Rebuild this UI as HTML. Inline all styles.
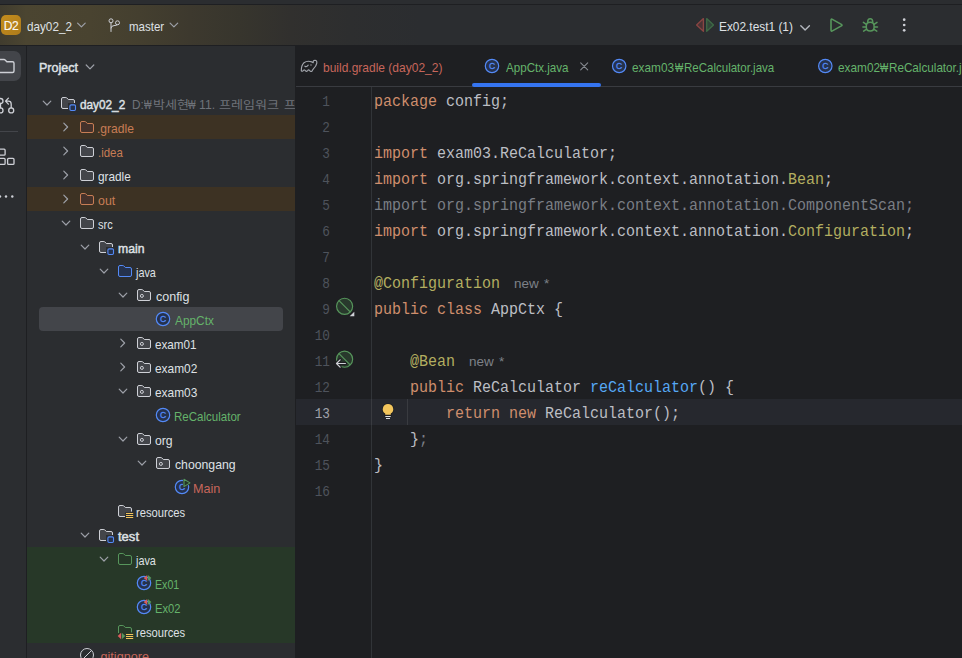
<!DOCTYPE html>
<html lang="ko">
<head>
<meta charset="utf-8">
<title>day02_2 – AppCtx.java</title>
<style>
html,body{margin:0;padding:0;}
body{width:962px;height:658px;overflow:hidden;background:#2b2d30;position:relative;
 font-family:"Liberation Sans","Noto Sans CJK KR",sans-serif;font-size:13px;color:#dfe1e5;}
.abs{position:absolute;}
svg{overflow:visible;}
#topstrip{left:0;top:0;width:962px;height:4px;background:#2b2d30;}
#topline{left:0;top:4px;width:962px;height:1px;background:#1e1f22;}
#toolbar{left:0;top:5px;width:962px;height:40px;background:linear-gradient(90deg,#403c2e 0px,#4b4531 26px,#494330 90px,#443f2f 140px,#3d392e 190px,#37352d 240px,#31302e 290px,#2d2e2f 350px,#2b2d30 420px);}
#toolline{left:0;top:45px;width:962px;height:1px;background:#1e1f22;}
#stripe{left:0;top:46px;width:26px;height:612px;background:#2b2d30;overflow:hidden;}
#stripeline{left:26px;top:46px;width:1px;height:612px;background:#1e1f22;}
#panel{left:27px;top:46px;width:268px;height:612px;background:#2b2d30;overflow:hidden;}
#panelline{left:295px;top:46px;width:1px;height:612px;background:#1e1f22;}
#editor{left:296px;top:46px;width:666px;height:612px;background:#1e1f22;overflow:hidden;}
.t{position:absolute;white-space:pre;line-height:16px;}
.ui{transform:scaleX(0.895);transform-origin:0 50%;}
.b{font-weight:normal;-webkit-text-stroke:0.45px currentColor;}
.ign{color:#c77d55;}
.add{color:#65b36b;}
.unk{color:#c7665b;}
.grey{color:#6f737a;}
.code{position:absolute;left:78px;white-space:pre;font-family:"Liberation Mono","Noto Sans CJK KR",monospace;font-size:16.5px;line-height:26px;height:26px;color:#bcbec4;transform:scaleX(0.90894);transform-origin:0 50%;}
.ln{position:absolute;left:-66.2px;width:100px;text-align:right;font-family:"Liberation Mono",monospace;font-size:14px;line-height:26px;height:26px;color:#4e535c;transform:scaleX(0.91);transform-origin:100% 50%;}
.ln.cur{color:#a1a3ab;}
.k{color:#cf8e6d;}
.a{color:#b3ae60;}
.m{color:#56a8f5;}
.u{color:#7a7e85;}
.hint{font-family:"Liberation Sans",sans-serif;font-size:13.5px;color:#7d8188;word-spacing:1.5px;}
</style>
</head>
<body>
<div id="topstrip" class="abs"></div>
<div id="topline" class="abs"></div>
<div id="toolbar" class="abs">
<div class="abs" style="left:1px;top:10px;width:20px;height:20px;border-radius:5px;background:linear-gradient(135deg,#c48d1d,#ad7b1b)"></div>
<span class="t" style="left:1px;top:13px;width:20px;text-align:center;font-size:12px;color:rgba(255,255,255,.93);letter-spacing:-0.4px;-webkit-text-stroke:0.2px rgba(255,255,255,.93)">D2</span>
<span class="t ui " style="left:27.00px;top:13.8px;transform:scaleX(0.9003)">day02_2</span>
<svg class="abs" style="left:73px;top:11px" width="16" height="16" viewBox="0 0 16 16"><g transform="translate(0.4 0.9)"><path d="M4.2 6.2 L8 10 L11.8 6.2" fill="none" stroke="#9da0a8" stroke-width="1.2" stroke-linecap="round" stroke-linejoin="round"/></g></svg>
<svg class="abs" style="left:106px;top:12px" width="16" height="16" viewBox="0 0 16 16"><circle cx="5" cy="3.8" r="2" fill="none" stroke="#ced0d6"/><circle cx="11.5" cy="5.8" r="2" fill="none" stroke="#ced0d6"/><path d="M5 5.8 V14.5 M5 11 Q5 8.8 8 8.6 Q11.2 8.4 11.4 7.8" fill="none" stroke="#ced0d6" stroke-linecap="round"/></svg>
<span class="t ui " style="left:128.50px;top:13.8px;transform:scaleX(0.8836)">master</span>
<svg class="abs" style="left:165px;top:11px" width="16" height="16" viewBox="0 0 16 16"><g transform="translate(0.9 0.9)"><path d="M4.2 6.2 L8 10 L11.8 6.2" fill="none" stroke="#9da0a8" stroke-width="1.2" stroke-linecap="round" stroke-linejoin="round"/></g></svg>
<span class="t ui " style="left:718.69px;top:13.8px;transform:scaleX(0.9133)">Ex02.test1 (1)</span>
</div>
<div id="toolline" class="abs"></div>
<div id="stripe" class="abs">
<div class="abs" style="left:-9px;top:5px;width:30px;height:30px;border-radius:7px;background:#43454a"></div>
<svg class="abs" style="left:-4px;top:10px" width="20" height="20" viewBox="0 0 20 20"><g transform="translate(0.5 0)"><path d="M0.5 5 Q0.5 3.5 2 3.5 H7.6 Q8.2 3.5 8.6 3.9 L10.4 5.7 H16 Q17.5 5.7 17.5 7.2 V15 Q17.5 16.5 16 16.5 H2 Q0.5 16.5 0.5 15 Z" fill="none" stroke="#ced0d6" stroke-width="1.4"/></g></svg>
<svg class="abs" style="left:-4px;top:49px" width="20" height="20" viewBox="0 0 20 20"><g transform="translate(0 0.7)"><circle cx="4.5" cy="5.3" r="2.5" fill="none" stroke="#ced0d6" stroke-width="1.3"/><circle cx="4.5" cy="14.7" r="2.5" fill="none" stroke="#ced0d6" stroke-width="1.3"/><circle cx="15.2" cy="14.7" r="2.5" fill="none" stroke="#ced0d6" stroke-width="1.3"/><path d="M4.5 7.8 V12.2 M15.2 12.2 V8.2 Q15.2 5.4 12.4 5.4 H9.9 M12.4 2.4 L9.5 5.4 L12.4 8.4" fill="none" stroke="#ced0d6" stroke-width="1.3" stroke-linecap="round" stroke-linejoin="round"/></g></svg>
<div class="abs" style="left:0;top:85px;width:18px;height:1px;background:#43454a"></div>
<svg class="abs" style="left:0px;top:100px" width="20" height="22" viewBox="0 0 20 22"><rect x="-1.5" y="3.2" width="6.6" height="6" rx="1" fill="none" stroke="#ced0d6" stroke-width="1.3"/><rect x="-1.5" y="12.4" width="6.6" height="6" rx="1" fill="none" stroke="#ced0d6" stroke-width="1.3"/><rect x="7.6" y="12.4" width="6.4" height="6" rx="1" fill="none" stroke="#ced0d6" stroke-width="1.3"/></svg>
<svg class="abs" style="left:0px;top:148px" width="16" height="4" viewBox="0 0 16 4"><g transform="translate(0 0.5)"><circle cx="0" cy="2" r="1.2" fill="#ced0d6"/><circle cx="6" cy="2" r="1.2" fill="#ced0d6"/><circle cx="12.3" cy="2" r="1.2" fill="#ced0d6"/></g></svg>
</div>
<div id="stripeline" class="abs"></div>
<div id="panel" class="abs">
<span class="t ui b" style="left:11.84px;top:13.8px;transform:scaleX(0.9637)">Project</span>
<svg class="abs" style="left:55px;top:12px" width="16" height="16" viewBox="0 0 16 16"><g transform="translate(0 0.8)"><path d="M4.2 6.2 L8 10 L11.8 6.2" fill="none" stroke="#9da0a8" stroke-width="1.2" stroke-linecap="round" stroke-linejoin="round"/></g></svg>
<svg class="abs" style="left:12px;top:49px" width="16" height="16" viewBox="0 0 16 16"><path d="M4.2 6.2 L8 10 L11.8 6.2" fill="none" stroke="#9da0a8" stroke-width="1.2" stroke-linecap="round" stroke-linejoin="round"/></svg>
<svg class="abs" style="left:33px;top:49px" width="16" height="16" viewBox="0 0 16 16"><path d="M1.5 4 Q1.5 2.5 3 2.5 H5.9 Q6.4 2.5 6.8 2.9 L8.3 4.5 H13 Q14.5 4.5 14.5 6 V8 H8 V13.5 H3 Q1.5 13.5 1.5 12 Z" fill="#43454a" stroke="none"/><path d="M14.5 8 V6 Q14.5 4.5 13 4.5 H8.3 L6.8 2.9 Q6.4 2.5 5.9 2.5 H3 Q1.5 2.5 1.5 4 V12 Q1.5 13.5 3 13.5 H8" fill="none" stroke="#ced0d6" stroke-width="1"/><rect x="9.9" y="9.9" width="5.6" height="5.6" rx="1.2" fill="#25324d" stroke="#548af7" stroke-width="1.1"/></svg>
<span class="t ui b" style="left:53.20px;top:50.5px;transform:scaleX(0.9063)">day02_2</span>
<span class="t ui grey" style="left:104.80px;top:50.5px;transform:scaleX(0.9044)">D:</span>
<span class="t ui grey" style="left:116.90px;top:50.5px;transform:scaleX(0.6154)">₩</span>
<span class="t ui grey" style="left:125.57px;top:50.5px;font-size:11.5px;transform:scaleX(1.1340)">박세현</span>
<span class="t ui grey" style="left:161.30px;top:50.5px;transform:scaleX(0.6154)">₩</span>
<span class="t ui grey" style="left:172.00px;top:50.5px;transform:scaleX(0.9397)">11.</span>
<span class="t ui grey" style="left:192.40px;top:50.5px;font-size:11.5px;transform:scaleX(1.1353)">프레임워크</span>
<span class="t ui grey" style="left:256.90px;top:50.5px;font-size:11.5px;transform:scaleX(1.1200)">프</span>
<div class="abs" style="left:0;top:69px;width:268px;height:24px;background:#3d3223"></div>
<svg class="abs" style="left:30px;top:73px" width="16" height="16" viewBox="0 0 16 16"><g transform="translate(0.6 0)"><path d="M6.2 4.2 L10 8 L6.2 11.8" fill="none" stroke="#9da0a8" stroke-width="1.2" stroke-linecap="round" stroke-linejoin="round"/></g></svg>
<svg class="abs" style="left:52px;top:73px" width="16" height="16" viewBox="0 0 16 16"><path d="M1.5 4 Q1.5 2.5 3 2.5 H5.9 Q6.4 2.5 6.8 2.9 L8.3 4.5 H13 Q14.5 4.5 14.5 6 V12 Q14.5 13.5 13 13.5 H3 Q1.5 13.5 1.5 12 Z" fill="#45322b" stroke="#c77d55" stroke-width="1"/></svg>
<span class="t ui ign" style="left:70.47px;top:74.5px;transform:scaleX(0.9294)">.gradle</span>
<svg class="abs" style="left:30px;top:97px" width="16" height="16" viewBox="0 0 16 16"><g transform="translate(0.6 0)"><path d="M6.2 4.2 L10 8 L6.2 11.8" fill="none" stroke="#9da0a8" stroke-width="1.2" stroke-linecap="round" stroke-linejoin="round"/></g></svg>
<svg class="abs" style="left:52px;top:97px" width="16" height="16" viewBox="0 0 16 16"><path d="M1.5 4 Q1.5 2.5 3 2.5 H5.9 Q6.4 2.5 6.8 2.9 L8.3 4.5 H13 Q14.5 4.5 14.5 6 V12 Q14.5 13.5 13 13.5 H3 Q1.5 13.5 1.5 12 Z" fill="#43454a" stroke="#ced0d6" stroke-width="1"/></svg>
<span class="t ui ign" style="left:70.52px;top:98.5px;transform:scaleX(0.8798)">.idea</span>
<svg class="abs" style="left:30px;top:121px" width="16" height="16" viewBox="0 0 16 16"><g transform="translate(0.6 0)"><path d="M6.2 4.2 L10 8 L6.2 11.8" fill="none" stroke="#9da0a8" stroke-width="1.2" stroke-linecap="round" stroke-linejoin="round"/></g></svg>
<svg class="abs" style="left:52px;top:121px" width="16" height="16" viewBox="0 0 16 16"><path d="M1.5 4 Q1.5 2.5 3 2.5 H5.9 Q6.4 2.5 6.8 2.9 L8.3 4.5 H13 Q14.5 4.5 14.5 6 V12 Q14.5 13.5 13 13.5 H3 Q1.5 13.5 1.5 12 Z" fill="#43454a" stroke="#ced0d6" stroke-width="1"/></svg>
<span class="t ui " style="left:71.40px;top:122.5px;transform:scaleX(0.9079)">gradle</span>
<div class="abs" style="left:0;top:141px;width:268px;height:24px;background:#3d3223"></div>
<svg class="abs" style="left:30px;top:145px" width="16" height="16" viewBox="0 0 16 16"><g transform="translate(0.6 0)"><path d="M6.2 4.2 L10 8 L6.2 11.8" fill="none" stroke="#9da0a8" stroke-width="1.2" stroke-linecap="round" stroke-linejoin="round"/></g></svg>
<svg class="abs" style="left:52px;top:145px" width="16" height="16" viewBox="0 0 16 16"><path d="M1.5 4 Q1.5 2.5 3 2.5 H5.9 Q6.4 2.5 6.8 2.9 L8.3 4.5 H13 Q14.5 4.5 14.5 6 V12 Q14.5 13.5 13 13.5 H3 Q1.5 13.5 1.5 12 Z" fill="#45322b" stroke="#c77d55" stroke-width="1"/></svg>
<span class="t ui ign" style="left:71.40px;top:146.5px;transform:scaleX(0.9534)">out</span>
<svg class="abs" style="left:31px;top:169px" width="16" height="16" viewBox="0 0 16 16"><path d="M4.2 6.2 L8 10 L11.8 6.2" fill="none" stroke="#9da0a8" stroke-width="1.2" stroke-linecap="round" stroke-linejoin="round"/></svg>
<svg class="abs" style="left:52px;top:169px" width="16" height="16" viewBox="0 0 16 16"><path d="M1.5 4 Q1.5 2.5 3 2.5 H5.9 Q6.4 2.5 6.8 2.9 L8.3 4.5 H13 Q14.5 4.5 14.5 6 V12 Q14.5 13.5 13 13.5 H3 Q1.5 13.5 1.5 12 Z" fill="#43454a" stroke="#ced0d6" stroke-width="1"/></svg>
<span class="t ui " style="left:70.90px;top:170.5px;transform:scaleX(0.8469)">src</span>
<svg class="abs" style="left:50px;top:193px" width="16" height="16" viewBox="0 0 16 16"><path d="M4.2 6.2 L8 10 L11.8 6.2" fill="none" stroke="#9da0a8" stroke-width="1.2" stroke-linecap="round" stroke-linejoin="round"/></svg>
<svg class="abs" style="left:71px;top:193px" width="16" height="16" viewBox="0 0 16 16"><path d="M1.5 4 Q1.5 2.5 3 2.5 H5.9 Q6.4 2.5 6.8 2.9 L8.3 4.5 H13 Q14.5 4.5 14.5 6 V8 H8 V13.5 H3 Q1.5 13.5 1.5 12 Z" fill="#43454a" stroke="none"/><path d="M14.5 8 V6 Q14.5 4.5 13 4.5 H8.3 L6.8 2.9 Q6.4 2.5 5.9 2.5 H3 Q1.5 2.5 1.5 4 V12 Q1.5 13.5 3 13.5 H8" fill="none" stroke="#ced0d6" stroke-width="1"/><rect x="9.9" y="9.9" width="5.6" height="5.6" rx="1.2" fill="#25324d" stroke="#548af7" stroke-width="1.1"/></svg>
<span class="t ui b" style="left:91.20px;top:194.5px;transform:scaleX(0.9375)">main</span>
<svg class="abs" style="left:69px;top:217px" width="16" height="16" viewBox="0 0 16 16"><path d="M4.2 6.2 L8 10 L11.8 6.2" fill="none" stroke="#9da0a8" stroke-width="1.2" stroke-linecap="round" stroke-linejoin="round"/></svg>
<svg class="abs" style="left:90px;top:217px" width="16" height="16" viewBox="0 0 16 16"><path d="M1.5 4 Q1.5 2.5 3 2.5 H5.9 Q6.4 2.5 6.8 2.9 L8.3 4.5 H13 Q14.5 4.5 14.5 6 V12 Q14.5 13.5 13 13.5 H3 Q1.5 13.5 1.5 12 Z" fill="#25324d" stroke="#548af7" stroke-width="1"/></svg>
<span class="t ui " style="left:109.33px;top:218.5px;transform:scaleX(0.8314)">java</span>
<svg class="abs" style="left:88px;top:241px" width="16" height="16" viewBox="0 0 16 16"><path d="M4.2 6.2 L8 10 L11.8 6.2" fill="none" stroke="#9da0a8" stroke-width="1.2" stroke-linecap="round" stroke-linejoin="round"/></svg>
<svg class="abs" style="left:109px;top:241px" width="16" height="16" viewBox="0 0 16 16"><path d="M1.5 4 Q1.5 2.5 3 2.5 H5.9 Q6.4 2.5 6.8 2.9 L8.3 4.5 H13 Q14.5 4.5 14.5 6 V12 Q14.5 13.5 13 13.5 H3 Q1.5 13.5 1.5 12 Z" fill="#43454a" stroke="#ced0d6" stroke-width="1"/><circle cx="5.9" cy="8.9" r="1.5" fill="none" stroke="#ced0d6" stroke-width="1"/></svg>
<span class="t ui " style="left:128.50px;top:242.5px;transform:scaleX(0.9605)">config</span>
<div class="abs" style="left:12px;top:261px;width:244px;height:24px;border-radius:4px;background:#43454a"></div>
<svg class="abs" style="left:128px;top:265px" width="16" height="16" viewBox="0 0 16 16"><circle cx="8" cy="8" r="6.7" fill="#25324d" stroke="#548af7" stroke-width="1.2"/><text transform="translate(8 0) scale(0.9 1) translate(-8 0)" x="8" y="11.45" text-anchor="middle" font-family="Liberation Sans, sans-serif" font-size="9.6" fill="#548af7" stroke="#548af7" stroke-width="0.3">C</text></svg>
<span class="t ui add" style="left:147.60px;top:266.5px;transform:scaleX(0.9112)">AppCtx</span>
<svg class="abs" style="left:87px;top:289px" width="16" height="16" viewBox="0 0 16 16"><g transform="translate(0.6 0)"><path d="M6.2 4.2 L10 8 L6.2 11.8" fill="none" stroke="#9da0a8" stroke-width="1.2" stroke-linecap="round" stroke-linejoin="round"/></g></svg>
<svg class="abs" style="left:109px;top:289px" width="16" height="16" viewBox="0 0 16 16"><path d="M1.5 4 Q1.5 2.5 3 2.5 H5.9 Q6.4 2.5 6.8 2.9 L8.3 4.5 H13 Q14.5 4.5 14.5 6 V12 Q14.5 13.5 13 13.5 H3 Q1.5 13.5 1.5 12 Z" fill="#43454a" stroke="#ced0d6" stroke-width="1"/><circle cx="5.9" cy="8.9" r="1.5" fill="none" stroke="#ced0d6" stroke-width="1"/></svg>
<span class="t ui " style="left:128.30px;top:290.5px;transform:scaleX(0.8975)">exam01</span>
<svg class="abs" style="left:87px;top:313px" width="16" height="16" viewBox="0 0 16 16"><g transform="translate(0.6 0)"><path d="M6.2 4.2 L10 8 L6.2 11.8" fill="none" stroke="#9da0a8" stroke-width="1.2" stroke-linecap="round" stroke-linejoin="round"/></g></svg>
<svg class="abs" style="left:109px;top:313px" width="16" height="16" viewBox="0 0 16 16"><path d="M1.5 4 Q1.5 2.5 3 2.5 H5.9 Q6.4 2.5 6.8 2.9 L8.3 4.5 H13 Q14.5 4.5 14.5 6 V12 Q14.5 13.5 13 13.5 H3 Q1.5 13.5 1.5 12 Z" fill="#43454a" stroke="#ced0d6" stroke-width="1"/><circle cx="5.9" cy="8.9" r="1.5" fill="none" stroke="#ced0d6" stroke-width="1"/></svg>
<span class="t ui " style="left:128.30px;top:314.5px;transform:scaleX(0.9148)">exam02</span>
<svg class="abs" style="left:88px;top:337px" width="16" height="16" viewBox="0 0 16 16"><path d="M4.2 6.2 L8 10 L11.8 6.2" fill="none" stroke="#9da0a8" stroke-width="1.2" stroke-linecap="round" stroke-linejoin="round"/></svg>
<svg class="abs" style="left:109px;top:337px" width="16" height="16" viewBox="0 0 16 16"><path d="M1.5 4 Q1.5 2.5 3 2.5 H5.9 Q6.4 2.5 6.8 2.9 L8.3 4.5 H13 Q14.5 4.5 14.5 6 V12 Q14.5 13.5 13 13.5 H3 Q1.5 13.5 1.5 12 Z" fill="#43454a" stroke="#ced0d6" stroke-width="1"/><circle cx="5.9" cy="8.9" r="1.5" fill="none" stroke="#ced0d6" stroke-width="1"/></svg>
<span class="t ui " style="left:128.30px;top:338.5px;transform:scaleX(0.9148)">exam03</span>
<svg class="abs" style="left:128px;top:361px" width="16" height="16" viewBox="0 0 16 16"><circle cx="8" cy="8" r="6.7" fill="#25324d" stroke="#548af7" stroke-width="1.2"/><text transform="translate(8 0) scale(0.9 1) translate(-8 0)" x="8" y="11.45" text-anchor="middle" font-family="Liberation Sans, sans-serif" font-size="9.6" fill="#548af7" stroke="#548af7" stroke-width="0.3">C</text></svg>
<span class="t ui add" style="left:146.71px;top:362.5px;transform:scaleX(0.8875)">ReCalculator</span>
<svg class="abs" style="left:88px;top:385px" width="16" height="16" viewBox="0 0 16 16"><path d="M4.2 6.2 L8 10 L11.8 6.2" fill="none" stroke="#9da0a8" stroke-width="1.2" stroke-linecap="round" stroke-linejoin="round"/></svg>
<svg class="abs" style="left:109px;top:385px" width="16" height="16" viewBox="0 0 16 16"><path d="M1.5 4 Q1.5 2.5 3 2.5 H5.9 Q6.4 2.5 6.8 2.9 L8.3 4.5 H13 Q14.5 4.5 14.5 6 V12 Q14.5 13.5 13 13.5 H3 Q1.5 13.5 1.5 12 Z" fill="#43454a" stroke="#ced0d6" stroke-width="1"/><circle cx="5.9" cy="8.9" r="1.5" fill="none" stroke="#ced0d6" stroke-width="1"/></svg>
<span class="t ui " style="left:128.30px;top:386.5px;transform:scaleX(0.9375)">org</span>
<svg class="abs" style="left:107px;top:409px" width="16" height="16" viewBox="0 0 16 16"><path d="M4.2 6.2 L8 10 L11.8 6.2" fill="none" stroke="#9da0a8" stroke-width="1.2" stroke-linecap="round" stroke-linejoin="round"/></svg>
<svg class="abs" style="left:128px;top:409px" width="16" height="16" viewBox="0 0 16 16"><path d="M1.5 4 Q1.5 2.5 3 2.5 H5.9 Q6.4 2.5 6.8 2.9 L8.3 4.5 H13 Q14.5 4.5 14.5 6 V12 Q14.5 13.5 13 13.5 H3 Q1.5 13.5 1.5 12 Z" fill="#43454a" stroke="#ced0d6" stroke-width="1"/><circle cx="5.9" cy="8.9" r="1.5" fill="none" stroke="#ced0d6" stroke-width="1"/></svg>
<span class="t ui " style="left:147.60px;top:410.5px;transform:scaleX(0.9421)">choongang</span>
<svg class="abs" style="left:147px;top:433px" width="16" height="16" viewBox="0 0 16 16"><circle cx="8" cy="8" r="6.7" fill="#25324d" stroke="#548af7" stroke-width="1.2"/><text transform="translate(8 0) scale(0.9 1) translate(-8 0)" x="8" y="11.45" text-anchor="middle" font-family="Liberation Sans, sans-serif" font-size="9.6" fill="#548af7" stroke="#548af7" stroke-width="0.3">C</text><path d="M10 0.3 L16 3.9 L10 7.6 Z" fill="#2b2d30" stroke="#2b2d30" stroke-width="2.1" stroke-linejoin="round"/><path d="M10 0.3 L16 3.9 L10 7.6 Z" fill="#253627" stroke="#57965c" stroke-width="1.1" stroke-linejoin="round"/></svg>
<span class="t ui unk" style="left:165.93px;top:434.5px;transform:scaleX(0.9686)">Main</span>
<svg class="abs" style="left:90px;top:457px" width="16" height="16" viewBox="0 0 16 16"><path d="M14.5 8.6 V6 Q14.5 4.5 13 4.5 H8.3 L6.8 2.9 Q6.4 2.5 5.9 2.5 H3 Q1.5 2.5 1.5 4 V12 Q1.5 13.5 3 13.5 H8" fill="#43454a" stroke="#ced0d6" stroke-width="1"/><path d="M8.2 9.3 H16.5 V15.8 H8.2 Z" fill="#2b2d30"/><path d="M9 10.5 H16.2 M9 12.5 H16.2 M9 14.5 H16.2" stroke="#f2c55c" stroke-width="1.2"/></svg>
<span class="t ui " style="left:109.40px;top:458.5px;transform:scaleX(0.8614)">resources</span>
<svg class="abs" style="left:50px;top:481px" width="16" height="16" viewBox="0 0 16 16"><path d="M4.2 6.2 L8 10 L11.8 6.2" fill="none" stroke="#9da0a8" stroke-width="1.2" stroke-linecap="round" stroke-linejoin="round"/></svg>
<svg class="abs" style="left:71px;top:481px" width="16" height="16" viewBox="0 0 16 16"><path d="M1.5 4 Q1.5 2.5 3 2.5 H5.9 Q6.4 2.5 6.8 2.9 L8.3 4.5 H13 Q14.5 4.5 14.5 6 V8 H8 V13.5 H3 Q1.5 13.5 1.5 12 Z" fill="#43454a" stroke="none"/><path d="M14.5 8 V6 Q14.5 4.5 13 4.5 H8.3 L6.8 2.9 Q6.4 2.5 5.9 2.5 H3 Q1.5 2.5 1.5 4 V12 Q1.5 13.5 3 13.5 H8" fill="none" stroke="#ced0d6" stroke-width="1"/><rect x="9.9" y="9.9" width="5.6" height="5.6" rx="1.2" fill="#25324d" stroke="#548af7" stroke-width="1.1"/></svg>
<span class="t ui b" style="left:91.20px;top:482.5px;transform:scaleX(1.0027)">test</span>
<div class="abs" style="left:0;top:501px;width:268px;height:24px;background:#273828"></div>
<svg class="abs" style="left:69px;top:505px" width="16" height="16" viewBox="0 0 16 16"><path d="M4.2 6.2 L8 10 L11.8 6.2" fill="none" stroke="#9da0a8" stroke-width="1.2" stroke-linecap="round" stroke-linejoin="round"/></svg>
<svg class="abs" style="left:90px;top:505px" width="16" height="16" viewBox="0 0 16 16"><path d="M1.5 4 Q1.5 2.5 3 2.5 H5.9 Q6.4 2.5 6.8 2.9 L8.3 4.5 H13 Q14.5 4.5 14.5 6 V12 Q14.5 13.5 13 13.5 H3 Q1.5 13.5 1.5 12 Z" fill="#253627" stroke="#57965c" stroke-width="1"/></svg>
<span class="t ui " style="left:109.33px;top:506.5px;transform:scaleX(0.8314)">java</span>
<div class="abs" style="left:0;top:525px;width:268px;height:24px;background:#273828"></div>
<svg class="abs" style="left:109px;top:529px" width="16" height="16" viewBox="0 0 16 16"><circle cx="8" cy="8" r="6.7" fill="#25324d" stroke="#548af7" stroke-width="1.2"/><text transform="translate(8 0) scale(0.9 1) translate(-8 0)" x="8" y="11.45" text-anchor="middle" font-family="Liberation Sans, sans-serif" font-size="9.6" fill="#548af7" stroke="#548af7" stroke-width="0.3">C</text><path d="M11.2 0 L7.7 3.05 L11.2 6.1 Z" fill="#db5c5c"/><path d="M11.9 0 L15.4 2.95 L11.9 5.9 Z" fill="#57965c"/></svg>
<span class="t ui add" style="left:127.78px;top:530.5px;transform:scaleX(0.8169)">Ex01</span>
<div class="abs" style="left:0;top:549px;width:268px;height:24px;background:#273828"></div>
<svg class="abs" style="left:109px;top:553px" width="16" height="16" viewBox="0 0 16 16"><circle cx="8" cy="8" r="6.7" fill="#25324d" stroke="#548af7" stroke-width="1.2"/><text transform="translate(8 0) scale(0.9 1) translate(-8 0)" x="8" y="11.45" text-anchor="middle" font-family="Liberation Sans, sans-serif" font-size="9.6" fill="#548af7" stroke="#548af7" stroke-width="0.3">C</text><path d="M11.2 0 L7.7 3.05 L11.2 6.1 Z" fill="#db5c5c"/><path d="M11.9 0 L15.4 2.95 L11.9 5.9 Z" fill="#57965c"/></svg>
<span class="t ui add" style="left:127.74px;top:554.5px;transform:scaleX(0.8591)">Ex02</span>
<div class="abs" style="left:0;top:573px;width:268px;height:24px;background:#273828"></div>
<svg class="abs" style="left:90px;top:577px" width="16" height="16" viewBox="0 0 16 16"><path d="M14.5 9.4 V6 Q14.5 4.5 13 4.5 H8.3 L6.8 2.9 Q6.4 2.5 5.9 2.5 H3 Q1.5 2.5 1.5 4 V10" fill="none" stroke="#57965c" stroke-width="1"/><path d="M9 11.5 H16.2 M9 13.5 H16.2 M9 15.5 H16.2" stroke="#f2c55c" stroke-width="1.2"/><path d="M4.1 9.8 L0.7 13 L4.1 16.2 Z" fill="#db5c5c"/><path d="M4.9 9.8 L8.2 13 L4.9 16.2 Z" fill="#57965c"/></svg>
<span class="t ui " style="left:109.40px;top:578.5px;transform:scaleX(0.8614)">resources</span>
<svg class="abs" style="left:52px;top:601px" width="16" height="16" viewBox="0 0 16 16"><circle cx="8" cy="8" r="6.5" fill="none" stroke="#ced0d6" stroke-width="1"/><path d="M3.5 12.5 L12.5 3.5" stroke="#ced0d6" stroke-width="1"/></svg>
<span class="t ui unk" style="left:70.43px;top:602.5px;transform:scaleX(0.9723)">.gitignore</span>
</div>
<div id="panelline" class="abs"></div>
<div id="editor" class="abs">
<span class="t ui unk" style="left:26.60px;top:14px;transform:scaleX(0.9230)">build.gradle (day02_2)</span>
<svg class="abs" style="left:188px;top:12px" width="16" height="16" viewBox="0 0 16 16"><circle cx="8" cy="8" r="6.7" fill="#25324d" stroke="#548af7" stroke-width="1.2"/><text transform="translate(8 0) scale(0.9 1) translate(-8 0)" x="8" y="11.45" text-anchor="middle" font-family="Liberation Sans, sans-serif" font-size="9.6" fill="#548af7" stroke="#548af7" stroke-width="0.3">C</text></svg>
<span class="t ui add" style="left:209.60px;top:14px;transform:scaleX(0.8919)">AppCtx.java</span>
<svg class="abs" style="left:280px;top:12px" width="16" height="16" viewBox="0 0 16 16"><g transform="translate(0.2 0.3)"><path d="M4.5 4.5 L11.5 11.5 M11.5 4.5 L4.5 11.5" stroke="#868a91" stroke-width="1.1" stroke-linecap="round"/></g></svg>
<div class="abs" style="left:176px;top:37px;width:128.5px;height:4px;border-radius:2px;background:#3574f0;z-index:2"></div>
<svg class="abs" style="left:315px;top:12px" width="16" height="16" viewBox="0 0 16 16"><g transform="translate(0.2 0)"><circle cx="8" cy="8" r="6.7" fill="#25324d" stroke="#548af7" stroke-width="1.2"/><text transform="translate(8 0) scale(0.9 1) translate(-8 0)" x="8" y="11.45" text-anchor="middle" font-family="Liberation Sans, sans-serif" font-size="9.6" fill="#548af7" stroke="#548af7" stroke-width="0.3">C</text></g></svg>
<span class="t ui add" style="left:336.30px;top:14px;transform:scaleX(0.9105)">exam03</span>
<span class="t ui add" style="left:378.70px;top:14px;transform:scaleX(0.6692)">₩</span>
<span class="t ui add" style="left:387.61px;top:14px;transform:scaleX(0.8853)">ReCalculator.java</span>
<svg class="abs" style="left:521px;top:12px" width="16" height="16" viewBox="0 0 16 16"><g transform="translate(0.3 0)"><circle cx="8" cy="8" r="6.7" fill="#25324d" stroke="#548af7" stroke-width="1.2"/><text transform="translate(8 0) scale(0.9 1) translate(-8 0)" x="8" y="11.45" text-anchor="middle" font-family="Liberation Sans, sans-serif" font-size="9.6" fill="#548af7" stroke="#548af7" stroke-width="0.3">C</text></g></svg>
<span class="t ui add" style="left:541.90px;top:14px;transform:scaleX(0.9105)">exam02</span>
<span class="t ui add" style="left:584.30px;top:14px;transform:scaleX(0.6692)">₩</span>
<span class="t ui add" style="left:593.20px;top:14px;transform:scaleX(0.8983)">ReCalculator.j</span>
<div class="abs" style="left:0;top:40px;width:666px;height:1px;background:#393b40"></div>
<div class="abs" style="left:75px;top:41px;width:1px;height:571px;background:#313438"></div>
<div class="abs" style="left:0;top:353px;width:666px;height:26px;background:#26282e"></div>
<div class="abs" style="left:75px;top:353px;width:1px;height:26px;background:#393b40"></div>
<div class="abs" style="left:111px;top:353px;width:1px;height:26px;background:#393b40"></div>
<div class="ln" style="top:42.75px">1</div>
<div class="code" style="top:42.75px"><span class="k">package</span> config;</div>
<div class="ln" style="top:68.75px">2</div>
<div class="ln" style="top:94.75px">3</div>
<div class="code" style="top:94.75px"><span class="k">import</span> exam03.ReCalculator;</div>
<div class="ln" style="top:120.75px">4</div>
<div class="code" style="top:120.75px"><span class="k">import</span> org.springframework.context.annotation.<span class="a">Bean</span>;</div>
<div class="ln" style="top:146.75px">5</div>
<div class="code" style="top:146.75px"><span class="u">import org.springframework.context.annotation.ComponentScan;</span></div>
<div class="ln" style="top:172.75px">6</div>
<div class="code" style="top:172.75px"><span class="k">import</span> org.springframework.context.annotation.<span class="a">Configuration</span>;</div>
<div class="ln" style="top:198.75px">7</div>
<div class="ln" style="top:224.75px">8</div>
<div class="code" style="top:224.75px"><span class="a">@Configuration</span></div>
<div class="ln" style="top:250.75px">9</div>
<div class="code" style="top:250.75px"><span class="k">public class</span> AppCtx {</div>
<div class="ln" style="top:276.75px">10</div>
<div class="ln" style="top:302.75px">11</div>
<div class="code" style="top:302.75px">    <span class="a">@Bean</span></div>
<div class="ln" style="top:328.75px">12</div>
<div class="code" style="top:328.75px">    <span class="k">public</span> ReCalculator <span class="m">reCalculator</span>() {</div>
<div class="ln cur" style="top:354.75px">13</div>
<div class="code" style="top:354.75px">        <span class="k">return new</span> ReCalculator();</div>
<div class="ln" style="top:380.75px">14</div>
<div class="code" style="top:380.75px">    }<span class="u">;</span></div>
<div class="ln" style="top:406.75px">15</div>
<div class="code" style="top:406.75px">}</div>
<div class="ln" style="top:432.75px">16</div>
<span class="t hint" style="left:218px;top:230px">new *</span>
<span class="t hint" style="left:173px;top:308px">new *</span>
<svg class="abs" style="left:38px;top:250px" width="20" height="20" viewBox="0 0 20 20"><g transform="translate(0.6 0.3)"><circle cx="10" cy="10" r="8.05" fill="#28392c" stroke="#57965c" stroke-width="1.15"/><path d="M4.4 4.4 L15.6 15.6" stroke="#57965c" stroke-width="1.2"/><path d="M19.7 15.4 V20 H15.1 Z" fill="#ced0d6"/></g></svg>
<svg class="abs" style="left:38px;top:303px" width="20" height="20" viewBox="0 0 20 20"><g transform="translate(0.6 0.2)"><circle cx="10" cy="10" r="8.05" fill="#28392c" stroke="#57965c" stroke-width="1.15"/><path d="M4.4 4.4 L15.6 15.6" stroke="#57965c" stroke-width="1.2"/><path d="M1.9 14.3 H10.8 M5.5 10.6 L1.9 14.3 L5.5 18" fill="none" stroke="#1e1f22" stroke-width="3.4" stroke-linecap="round" stroke-linejoin="round"/><path d="M1.9 14.3 H10.8 M5.5 10.6 L1.9 14.3 L5.5 18" fill="none" stroke="#ced0d6" stroke-width="1.2" stroke-linecap="round" stroke-linejoin="round"/></g></svg>
<svg class="abs" style="left:84px;top:357px" width="16" height="16" viewBox="0 0 16 16"><g transform="translate(0 0.5)"><path d="M8 0.5 A5.2 5.2 0 0 0 5 9.95 V12 H11 V9.95 A5.2 5.2 0 0 0 8 0.5 Z" fill="#1e1f22" stroke="#1e1f22" stroke-width="1.6"/><path d="M8 0.5 A5.2 5.2 0 0 0 5.2 10.1 V11.3 H10.8 V10.1 A5.2 5.2 0 0 0 8 0.5 Z" fill="#f2c55c"/><path d="M5.3 13 H10.7 M6 15 H10" stroke="#dfe1e5" stroke-width="1"/></g></svg>
</div>
<svg class="abs" style="left:0;top:0;pointer-events:none" width="962" height="658" viewBox="0 0 962 658"><path d="M703.4 18.6 L696.6 24.9 L703.4 31.2 Z" fill="#4a3334" stroke="#8a4543" stroke-width="1.3" stroke-linejoin="round"/>
<path d="M706.7 18.6 L713.5 24.9 L706.7 31.2 Z" fill="#32473a" stroke="#3f6b46" stroke-width="1.3" stroke-linejoin="round"/>
<path d="M800.8 25.8 L805.1 30 L809.4 25.8" fill="none" stroke="#b4b8bf" stroke-width="1.4" stroke-linecap="round" stroke-linejoin="round"/>
<path d="M831 20.2 Q831 18.6 832.4 19.4 L841.4 24.4 Q842.6 25.15 841.4 25.9 L832.4 30.9 Q831 31.7 831 30.1 Z" fill="none" stroke="#57965c" stroke-width="1.6" stroke-linejoin="round"/>
<g fill="none" stroke="#57965c" stroke-width="1.5" stroke-linecap="round" stroke-linejoin="round"><path d="M866.3 26 Q866.3 22.3 870.2 22.3 Q874.1 22.3 874.1 26 V27.2 Q874.1 31 870.2 31 Q866.3 31 866.3 27.2 Z"/><path d="M867.7 22 Q867.7 18.8 870.2 18.8 Q872.7 18.8 872.7 22"/><path d="M866 24.2 L863.4 22.4 M865.8 26.9 H862.9 M866.3 29.4 L863.6 31.1 M874.4 24.2 L877 22.4 M874.6 26.9 H877.5 M874.1 29.4 L876.8 31.1"/></g>
<g fill="none" stroke="#a3a6ad" stroke-width="1.15" stroke-linecap="round" stroke-linejoin="round"><path d="M301.3 70.8 Q301.2 65.5 304 62.7 Q307.2 60.3 311.8 61.9 L313.2 62.7 Q312.9 60.4 315 60.2 Q317.1 60.4 316.8 63.2 Q316.3 66 313.6 68.6 Q312.4 70 311.9 71.3 Q310.4 71.9 309.6 70.5 Q308.6 69.3 307.6 70.6 Q306.4 72 305.4 70.7 Q304.4 69.3 303.4 70.5 Q302.4 71.8 301.3 70.8 Z"/><path d="M304.9 66.2 Q306.5 67.4 308.2 65.2"/></g>
<circle cx="311" cy="65" r="0.7" fill="#a3a6ad"/>
<circle cx="904.2" cy="19.7" r="1.35" fill="#ced0d6"/>
<circle cx="904.2" cy="25" r="1.35" fill="#ced0d6"/>
<circle cx="904.2" cy="30.3" r="1.35" fill="#ced0d6"/></svg>
</body>
</html>
